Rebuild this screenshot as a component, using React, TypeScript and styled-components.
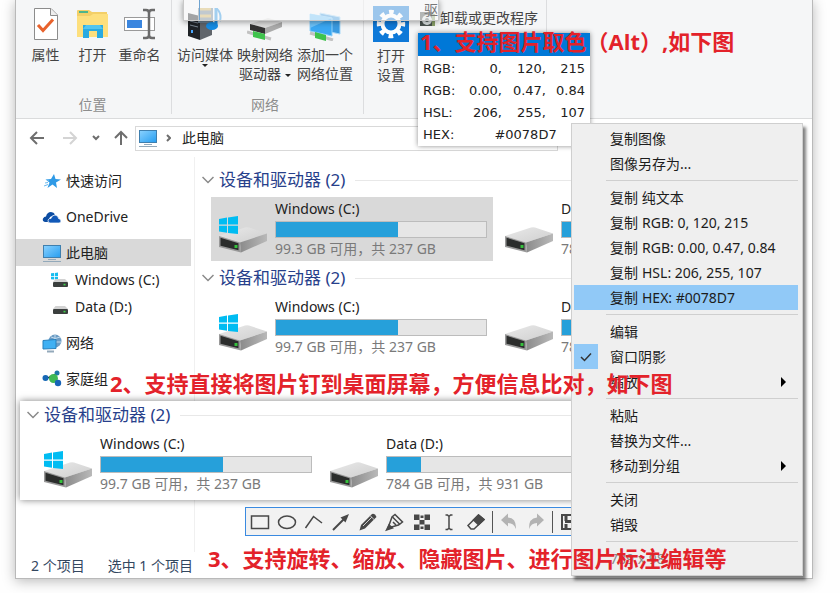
import React from "react";
import styled, { createGlobalStyle, css } from "styled-components";

const uiFont = `"Noto Sans", "Noto Sans CJK SC", sans-serif`;

const GlobalStyle = createGlobalStyle`
  * { box-sizing: border-box; }
  body { margin: 0; background: #fefefe; font-family: ${uiFont}; font-size: 14px; line-height: 18px; color: #222; }
  button, input { font: inherit; color: inherit; }
  button { background: none; border: 0; padding: 0; margin: 0; text-align: left; white-space: nowrap; }
  h2, ul, p { margin: 0; padding: 0; font-weight: 400; }
  svg { display: block; flex: none; }
`;

const Desktop = styled.main`
  position: relative;
  display: flex;
  flex-direction: column;
  min-height: 100vh;
  padding: 0 27px 14px 15px;
  overflow: hidden;
`;

const Window = styled.section`
  flex: 1;
  display: flex;
  flex-direction: column;
  background: #fff;
  border: solid #b9b9b9;
  border-width: 0 1px 1px;
  box-shadow: 0 2px 12px rgba(0, 0, 0, 0.28);
`;

/* Ribbon */

const Ribbon = styled.div`
  display: flex;
  height: 119px;
  background: #f5f6f7;
  border-bottom: 1px solid #dadbdc;
`;

const RibbonGroup = styled.div<{ $pad?: string }>`
  display: flex;
  flex-direction: column;
  justify-content: space-between;
  margin: 0 0 4px;
  padding: ${(p) => p.$pad ?? "8px 8px 0 6px"};
  border-right: 1px solid #dcdddf;
`;

const RibbonItems = styled.div`
  display: flex;
`;

const RibbonButton = styled.button<{ $width: number }>`
  display: flex;
  flex-direction: column;
  align-items: center;
  width: ${(p) => p.$width}px;
  text-align: center;
  color: #444;
  line-height: 19px;
  svg { margin-bottom: 4px; }
`;

const GroupLabel = styled.div`
  text-align: center;
  color: #8d8d8d;
`;

const DownMark = styled.i<{ $inline?: boolean }>`
  display: ${(p) => (p.$inline ? "inline-block" : "block")};
  margin-left: ${(p) => (p.$inline ? 4 : 0)}px;
  vertical-align: middle;
  border: 3px solid transparent;
  border-top-color: #222;
  border-bottom: 0;
`;

const ProgramButton = styled.button`
  display: flex;
  align-items: center;
  gap: 4px;
  height: 24px;
  margin-left: 5px;
  color: #444;
`;

/* Address row */

const AddressRow = styled.nav`
  display: flex;
  align-items: center;
  height: 38px;
  padding-left: 13px;
`;

const NavButton = styled.button<{ $width: number }>`
  width: ${(p) => p.$width}px;
`;

const AddressBox = styled.div`
  display: flex;
  align-items: center;
  flex: 0 1 423px;
  height: 25px;
  padding: 0 2px;
  border: 1px solid #d9d9d9;
  gap: 8px;
  button { margin-left: 3px; }
`;

/* Body */

const Body = styled.div`
  display: flex;
  flex: 1;
`;

const Sidebar = styled.ul`
  flex: none;
  width: 179px;
  padding: 10px 3px 0 0;
  list-style: none;
  border-right: 1px solid #f0f0f0;
`;

const SideLink = styled.button<{ $selected?: boolean; $nested?: boolean; $gap?: boolean }>`
  display: flex;
  align-items: center;
  gap: ${(p) => (p.$nested ? 6 : 4)}px;
  width: 100%;
  height: 27px;
  margin-bottom: ${(p) => (p.$gap ? 9 : 0)}px;
  padding-left: ${(p) => (p.$nested ? 35 : 26)}px;
  background: ${(p) => (p.$selected ? "#d9d9d9" : "transparent")};
`;

const Content = styled.div`
  flex: 1;
  min-width: 0;
  padding: 10px 24px 0 7px;
`;

const GroupBox = styled.section`
  height: 98px;
`;

const GroupTitle = styled.h2`
  display: flex;
  align-items: center;
  gap: 5px;
  height: 26px;
  font-size: 17px;
  line-height: 26px;
  color: #27408b;
  white-space: nowrap;
  &::after {
    content: "";
    flex: 1;
    margin-left: 5px;
    border-top: 1px solid #e8e8e8;
  }
`;

const Tiles = styled.div`
  display: flex;
  gap: 4px;
  margin: 4px 0 0 9px;
`;

const Tile = styled.article<{ $selected?: boolean }>`
  display: flex;
  flex: none;
  gap: 8px;
  width: 282px;
  height: 64px;
  padding: 3px 6px 0 8px;
  background: ${(p) => (p.$selected ? "#d9d9d9" : "transparent")};
  > svg { margin-top: 16px; }
`;

const TileText = styled.div`
  width: 212px;
`;

const Capacity = styled.div`
  height: 17px;
  margin: 3px 0 2px;
  border: 1px solid #bcbcbc;
  background: #e6e6e6;
`;

const Used = styled.div`
  height: 100%;
  background: #26a0da;
`;

const FreeText = styled.p`
  color: #7a7a7a;
  white-space: nowrap;
`;

const StatusBar = styled.footer`
  display: flex;
  gap: 23px;
  height: 26px;
  padding-left: 15px;
  line-height: 27px;
  color: #33475f;
`;

/* Things floating over the window */

const GhostClip = styled.div`
  position: absolute;
  left: 183px;
  top: 0;
  display: flex;
  justify-content: flex-end;
  width: 256px;
  height: 21px;
  background: rgba(250, 250, 250, 0.6);
  border: solid #c8c8c8;
  border-width: 0 1px 1px;
  box-shadow: 0 1px 6px rgba(0, 0, 0, 0.4);
  color: #777;
  line-height: 20px;
  &::before {
    content: "";
    width: 1px;
    margin-right: auto;
    margin-left: 15px;
    background: #6fa3d0;
  }
`;

const Picker = styled.div`
  position: absolute;
  left: 418px;
  top: 33px;
  width: 172px;
  background: #fff;
  box-shadow: 0 0 5px rgba(0, 0, 0, 0.45);
  font-family: "DejaVu Sans", sans-serif;
  font-size: 13px;
`;

const Swatch = styled.div`
  height: 23px;
  background: #0078d7;
`;

const Values = styled.table`
  width: 100%;
  padding: 2px 5px 0;
  border-spacing: 0;
  th, td { height: 22px; padding: 0; text-align: right; line-height: 22px; }
  th { text-align: left; font-weight: 400; }
  td:nth-child(3) { width: 44px; }
  td:nth-child(4) { width: 39px; }
  td[colspan] { text-align: center; padding-left: 4px; }
`;

const Pinned = styled.div`
  position: absolute;
  left: 20px;
  top: 401px;
  width: 640px;
  height: 99px;
  padding: 1px 20px 0 7px;
  background: #fff;
  box-shadow: 0 0 7px rgba(0, 0, 0, 0.5);
  overflow: hidden;
`;

const Toolbar = styled.div`
  position: absolute;
  left: 245px;
  top: 507px;
  display: flex;
  align-items: center;
  width: 420px;
  height: 29px;
  background: #f2f2f2;
  border: 1px solid #3a8ae0;
`;

const ToolButton = styled.button`
  display: flex;
  justify-content: center;
  width: 27px;
`;

const ToolDivider = styled.span`
  width: 1px;
  height: 22px;
  margin: 0 2px 0 3px;
  background: #555;
`;

const Menu = styled.div`
  position: absolute;
  left: 571px;
  top: 123px;
  width: 232px;
  padding: 2px 4px 4px 2px;
  background: #efefef;
  border: 1px solid #cfcfcf;
  box-shadow: 3px 4px 3px rgba(0, 0, 0, 0.5);
`;

const MenuItem = styled.button<{ $active?: boolean; $muted?: boolean }>`
  display: grid;
  grid-template-columns: 24px auto auto 1fr;
  align-items: center;
  width: 100%;
  height: 25px;
  color: ${(p) => (p.$muted ? "#8a8a8a" : "#1c1c1c")};
  ${(p) => p.$active && css`background: #91c9f7;`}
`;

const CheckCell = styled.span<{ $on?: boolean }>`
  display: flex;
  align-items: center;
  justify-content: center;
  height: 25px;
  background: ${(p) => (p.$on ? "#91c9f7" : "transparent")};
`;

const ItemText = styled.span`
  padding-left: 12px;
`;

const ItemValue = styled.span`
  padding-left: 4px;
`;

const SubMark = styled.i`
  justify-self: end;
  margin-right: 12px;
  border: 5px solid transparent;
  border-left-color: #000;
  border-right: 0;
`;

const MenuRule = styled.hr`
  height: 1px;
  margin: 4px 0 4px 32px;
  border: 0;
  background: #cfcfcf;
`;

const Note = styled.p<{ $x: number; $y: number }>`
  position: absolute;
  left: ${(p) => p.$x}px;
  top: ${(p) => p.$y}px;
  font-family: "Open Sans", "Noto Sans CJK SC", sans-serif;
  font-size: 22px;
  line-height: 28px;
  font-weight: 700;
  color: #e3222a;
  white-space: nowrap;
`;

/* Drawings */

const Drive = ({ system }: { system?: boolean }) => (
  <svg width="48" height="37" viewBox="0 0 48 37">
    <defs>
      <linearGradient id="driveTop" x1="0" x2="1" y1="0" y2="1">
        <stop offset="0" stopColor="#e9e9e9" />
        <stop offset="1" stopColor="#cfcfcf" />
      </linearGradient>
      <linearGradient id="driveSide" x1="0" x2="1">
        <stop offset="0" stopColor="#8b8b8b" />
        <stop offset="1" stopColor="#b9b9b9" />
      </linearGradient>
    </defs>
    <path d="M0 20 26 11.5q2-.5 4 0L48 17.5 21 26.5z" fill="url(#driveTop)" />
    <path d="M21 26.5 48 17.5V25L22 36.5z" fill="url(#driveSide)" />
    <path d="M0 20 21 26.5 22 36.5 0 31z" fill="#999" />
    <path d="M1.5 21.7 19.5 27.3V34.2L1.5 29.7z" fill="#2b2d2c" />
    <rect x="15.5" y="29" width="3" height="3" fill="#35c23c" />
    {system && <path d="M0 3 8 1.6V8.6H0zM9 1.4 19 0V8.6H9zM0 9.7H8V16.8L0 15.6zM9 9.7H19V18L9 16.9z" fill="#00bcf2" />}
  </svg>
);

const SmallDrive = ({ system }: { system?: boolean }) => (
  <svg width="18" height="16" viewBox="0 0 18 16">
    {system && <path d="M0 1.2 3 1V4H0zM3.8 1 7 .5V4H3.8zM0 4.8H3V7.5L0 7.2zM3.8 4.8H7V8L3.8 7.6z" fill="#16bdf0" />}
    <path d="M4.5 7H14L17 10H2z" fill="#d2d2d2" />
    <rect x="2" y="10" width="15" height="5" rx="1" fill="#3b3f3e" />
    <rect x="12.5" y="11.8" width="2" height="1.6" fill="#3fd14a" />
  </svg>
);

const Monitor = () => (
  <svg width="20" height="20" viewBox="0 0 20 20">
    <defs>
      <linearGradient id="screen" x1="0" x2="1" y1="0" y2="1">
        <stop offset="0" stopColor="#8bd2ff" />
        <stop offset="1" stopColor="#259df0" />
      </linearGradient>
    </defs>
    <rect x="1.5" y="2.5" width="17" height="12" fill="url(#screen)" stroke="#3f7fae" />
    <path d="M6 16.500H14M1 18.500H19" stroke="#93a9ba" />
  </svg>
);

const PropertiesIcon = () => (
  <svg width="26" height="33" viewBox="0 0 26 33">
    <path d="M1.500 .5H18L24.500 7V31.500H1.500z" fill="#fff" stroke="#8c8c8c" />
    <path d="M17.500 .5V7.500H24.500" fill="#eee" stroke="#8c8c8c" />
    <path d="M5 17 10 22.500 20 11.500" fill="none" stroke="#e8622c" strokeWidth="3" />
  </svg>
);

const FolderIcon = () => (
  <svg width="33" height="33" viewBox="0 0 33 33">
    <path d="M1 3Q1 2 2 2H13L16 4H31V28L1 29z" fill="#f3cf68" />
    <path d="M1 8H14L17 6H32V29H1z" fill="#fddf7d" />
    <rect x="3" y="3" width="9" height="2" fill="#4db58b" />
    <path d="M7 30V17H27V30H21V23H13V30z" fill="#29aae1" />
    <path d="M7 21 10 17H24L27 21z" fill="#52c5f0" />
  </svg>
);

const RenameIcon = () => (
  <svg width="33" height="33" viewBox="0 0 33 33" fill="none">
    <rect x="1.500" y="9.500" width="30" height="13" fill="#fff" stroke="#9a9a9a" />
    <rect x="4" y="12" width="15" height="8" fill="#3a86df" />
    <path d="M20 2H23Q26 2 26 5V27Q26 30 23 30H20M32 2H29Q26 2 26 5M32 30H29Q26 30 26 27" stroke="#6b6b6b" strokeWidth="2.500" />
  </svg>
);

const MediaIcon = () => (
  <svg width="34" height="33" viewBox="0 0 34 33">
    <path d="M0 5 12 8V32L0 28z" fill="#1e2226" />
    <path d="M12 8 24 5V27L12 32z" fill="#60656b" />
    <path d="M2 13 10 15M2 17 10 19" stroke="#7b8793" />
    <rect x="3" y="22" width="2" height="3" fill="#4aa8ff" />
    <rect x="10" y="-2" width="15" height="17" fill="#6b7f8e" />
    <path d="M12 1H23M12 8H23" stroke="#cfae59" strokeWidth="3" />
    <path d="M28 0V18" stroke="#1f8ee0" strokeWidth="3" />
    <path d="M28 0Q34 5 32 13" fill="none" stroke="#1f8ee0" strokeWidth="2" />
    <ellipse cx="24" cy="18" rx="6" ry="4" fill="#168be2" />
  </svg>
);

const MapDriveIcon = () => (
  <svg width="36" height="33" viewBox="0 0 36 33">
    <path d="M3 16 21 10 35 14 18 20z" fill="#ddd" />
    <path d="M18 20 35 14V19L18 26z" fill="#aaa" />
    <path d="M3 16 18 20V26L3 22z" fill="#333" />
    <path d="M0 24 24 31" stroke="#c2c2c2" strokeWidth="3" />
    <path d="M6 23 18 26V32L6 29z" fill="#3fc34d" />
  </svg>
);

const NetPlaceIcon = () => (
  <svg width="32" height="33" viewBox="0 0 32 33">
    <path d="M11 5 31 9V26L11 22z" fill="#3b9ae0" stroke="#a8d7f7" />
    <path d="M1 6 23 10V28L1 23z" fill="#3aa7f2" stroke="#8fd0fa" />
    <path d="M1 6 23 10 1 20z" fill="#6ec3fa" />
    <path d="M1 25 24 32" stroke="#c2c2c2" strokeWidth="3" />
    <path d="M6 24 17 27V33L6 30z" fill="#3fc34d" />
  </svg>
);

const SettingsIcon = () => (
  <svg width="36" height="36" viewBox="0 0 36 36">
    <rect width="36" height="36" fill="#0f79d8" />
    <circle cx="18" cy="18" r="8.5" fill="none" stroke="#fff" strokeWidth="4" />
    <circle cx="18" cy="18" r="12" fill="none" stroke="#fff" strokeWidth="4.4" strokeDasharray="4.7 4.725" strokeDashoffset="2.35" />
  </svg>
);

const UninstallIcon = () => (
  <svg width="16" height="18" viewBox="0 0 16 18">
    <rect x="0" y="3" width="13" height="14" fill="#4b5350" />
    <rect x="12" y="5" width="3" height="12" fill="#8ba26a" />
    <circle cx="7" cy="11" r="5" fill="#dfe5e5" />
    <circle cx="7" cy="11" r="2" fill="#55605f" />
  </svg>
);

const Arrow = ({ d, color = "#6e6e6e", w = 16 }: { d: string; color?: string; w?: number }) => (
  <svg width={w} height="16" viewBox={`0 0 ${w} 16`} fill="none" stroke={color} strokeWidth="2">
    <path d={d} />
  </svg>
);

const StarIcon = () => (
  <svg width="20" height="18" viewBox="0 0 20 18">
    <path d="M12 2 13.5 7 19 7.5 14 10.5 15 16 10.5 12.5 5.500 16 7.500 10.500 3.500 7.500 9 7z" fill="#2f9ae6" />
    <path d="M3 11 6 10.500M2 14 6 12.500M5 8 7 8.500" stroke="#69b9ef" />
  </svg>
);

const CloudIcon = () => (
  <svg width="20" height="18" viewBox="0 0 20 18">
    <path d="M3 14Q0 13 1 10.500 2 8.500 4 8.500 5 4 9 4 12 4 13 6.500L8 9 6 14z" fill="#0c4da2" />
    <path d="M8 15Q5.500 14.500 6 12 7 10 9 10.500 10 7 13 7 16.500 7.500 16.500 10.500 19 11 19 13 19 15 17 15z" fill="#1259b8" stroke="#fff" strokeWidth=".7" />
  </svg>
);

const NetworkIcon = () => (
  <svg width="20" height="20" viewBox="0 0 20 20">
    <circle cx="13" cy="8" r="6.500" fill="#6c9cc4" />
    <path d="M9 4Q13 7 18 4M13 2V14M8 9H19" stroke="#c4dcee" fill="none" />
    <path d="M1 7.500 14 6.500V15.500L1 16z" fill="#3fb0f3" stroke="#2780bd" />
    <path d="M5 18.500H12" stroke="#93a9ba" strokeWidth="2" />
  </svg>
);

const HomegroupIcon = () => (
  <svg width="20" height="18" viewBox="0 0 20 18">
    <path d="M4 8 11 9 15 3M11 9 16 13" stroke="#9fc6d8" />
    <circle cx="3.500" cy="8" r="3" fill="#1667b5" />
    <circle cx="15" cy="3" r="2.500" fill="#1c78a6" />
    <circle cx="11.500" cy="8.500" r="4.500" fill="#3fb954" />
    <circle cx="16" cy="13" r="3.200" fill="#1764b8" />
  </svg>
);

const Chevron = () => (
  <svg width="12" height="12" viewBox="0 0 12 12" fill="none" stroke="#8a8a8a" strokeWidth="1.500">
    <path d="M.5 3 6 8.500 11.500 3" />
  </svg>
);

const Glyph = ({ children, w = 20 }: { children: React.ReactNode; w?: number }) => (
  <svg width={w} height="20" viewBox={`0 0 ${w} 20`} fill="none" stroke="#484848" strokeWidth="1.500">
    {children}
  </svg>
);

const tools: { name: string; art: React.ReactNode }[] = [
  { name: "矩形", art: <rect x="1.500" y="4" width="17" height="12.500" /> },
  { name: "椭圆", art: <ellipse cx="10" cy="10.200" rx="8.500" ry="6.200" /> },
  { name: "折线", art: <path d="M1.500 16 9.500 4.500 18 11" /> },
  { name: "箭头", art: <><path d="M2 18 14 6" strokeWidth="2" /><path d="M18 2 9.500 5.500 14.500 10.500z" fill="#484848" stroke="none" /></> },
  { name: "铅笔", art: <><path d="M1.500 18.500 3 13 14 2Q17 1 18.500 5L7 16.500z" fill="#484848" stroke="none" /><path d="M5 14 14 5M12 3.500 16.500 8" stroke="#d0d0d0" strokeWidth="1" /></> },
  { name: "记号笔", art: <><path d="M3 16 7 5 10 2.500 17.500 10 13.500 13z" /><path d="M7.500 5 15 12.500M8 10 11 13" /><path d="M1.500 18 4 13 7.500 16z" fill="#484848" /></> },
  { name: "马赛克", art: <path d="M2 2.500H7.500V8H2zM12.500 2.500H18V8H12.500zM7.500 8H12.500V12.500H7.500zM2 12.500H7.500V18H2zM12.500 12.500H18V18H12.500zM8.500 3.500H11.500V6H8.500zM8.500 14.500H11.500V17H8.500z" fill="#484848" stroke="none" /> },
  { name: "文字", art: <path d="M6.500 3H8.500L10 4.500 11.500 3H13.500M10 4.500V16M6.500 17.500H8.500L10 16 11.500 17.500H13.500" /> },
  { name: "橡皮擦", art: <><path d="M2 13.500 12.500 3 18 7.500 8 17H5z" /><path d="M7.500 8 12.500 3 18 7.500 12.500 12.800z" fill="#484848" /></> },
];

const undoPath = "M1 8 8 1.500V5.500Q16.500 6 16 17 14 11 8 11V14.500z";

/* Data driven parts */

interface DriveInfo {
  name: string;
  free: string;
  used: number;
  system?: boolean;
}

const dataDrive: DriveInfo = { name: "Data (D:)", free: "784 GB 可用，共 931 GB", used: 16 };

const DriveTile = ({ drive, selected }: { drive: DriveInfo; selected?: boolean }) => (
  <Tile $selected={selected}>
    <Drive system={drive.system} />
    <TileText>
      <p>{drive.name}</p>
      <Capacity role="meter" aria-label={drive.name} aria-valuenow={drive.used}>
        <Used style={{ width: `${drive.used}%` }} />
      </Capacity>
      <FreeText>{drive.free}</FreeText>
    </TileText>
  </Tile>
);

const DriveGroup = ({ free, selected }: { free: string; selected?: boolean }) => (
  <GroupBox>
    <GroupTitle>
      <Chevron />
      设备和驱动器 (2)
    </GroupTitle>
    <Tiles>
      <DriveTile selected={selected} drive={{ name: "Windows (C:)", free: `${free} GB 可用，共 237 GB`, used: 58, system: true }} />
      <DriveTile drive={dataDrive} />
    </Tiles>
  </GroupBox>
);

interface Entry {
  text: string;
  value?: string;
  active?: boolean;
  checked?: boolean;
  sub?: boolean;
  muted?: boolean;
}

const menuSections: Entry[][] = [
  [{ text: "复制图像" }, { text: "图像另存为..." }],
  [
    { text: "复制 纯文本" },
    { text: "复制", value: "RGB: 0, 120, 215" },
    { text: "复制", value: "RGB: 0.00, 0.47, 0.84" },
    { text: "复制", value: "HSL: 206, 255, 107" },
    { text: "复制", value: "HEX: #0078D7", active: true },
  ],
  [{ text: "编辑" }, { text: "窗口阴影", checked: true }, { text: "缩放", sub: true }],
  [{ text: "粘贴" }, { text: "替换为文件..." }, { text: "移动到分组", sub: true }],
  [{ text: "关闭" }, { text: "销毁" }],
  [{ text: "789 x 98", muted: true }],
];

export default function App() {
  return (
    <Desktop>
      <GlobalStyle />
      <Window>
        <Ribbon>
          <RibbonGroup>
            <RibbonItems>
              <RibbonButton $width={47}><PropertiesIcon />属性</RibbonButton>
              <RibbonButton $width={47}><FolderIcon />打开</RibbonButton>
              <RibbonButton $width={47}><RenameIcon />重命名</RibbonButton>
            </RibbonItems>
            <GroupLabel>位置</GroupLabel>
          </RibbonGroup>
          <RibbonGroup $pad="8px 8px 0 3px">
            <RibbonItems>
              <RibbonButton $width={60}><MediaIcon />访问媒体<DownMark /></RibbonButton>
              <RibbonButton $width={60}><MapDriveIcon />映射网络<span>驱动器<DownMark $inline /></span></RibbonButton>
              <RibbonButton $width={60}><NetPlaceIcon />添加一个<span>网络位置</span></RibbonButton>
            </RibbonItems>
            <GroupLabel>网络</GroupLabel>
          </RibbonGroup>
          <RibbonGroup $pad="6px 8px 0 3px">
            <RibbonItems>
              <RibbonButton $width={48}><SettingsIcon />打开<span>设置</span></RibbonButton>
              <ProgramButton><UninstallIcon />卸载或更改程序</ProgramButton>
            </RibbonItems>
          </RibbonGroup>
        </Ribbon>

        <AddressRow aria-label="地址">
          <NavButton $width={33} aria-label="后退"><Arrow d="M15 8H2M8 2 2 8 8 14" /></NavButton>
          <NavButton $width={30} aria-label="前进"><Arrow d="M1 8H14M8 2 14 8 8 14" color="#d4d4d4" /></NavButton>
          <NavButton $width={21} aria-label="最近位置"><Arrow w={8} d="M1 6 4 9 7 6" /></NavButton>
          <NavButton $width={22} aria-label="向上"><Arrow d="M8 15V2M2 8 8 2 14 8" /></NavButton>
          <AddressBox>
            <Monitor />
            <Arrow w={5} d="M1 5 4 8 1 11" />
            <button>此电脑</button>
          </AddressBox>
        </AddressRow>

        <Body>
          <Sidebar>
            <li><SideLink $gap><StarIcon />快速访问</SideLink></li>
            <li><SideLink $gap><CloudIcon />OneDrive</SideLink></li>
            <li><SideLink $selected><Monitor />此电脑</SideLink></li>
            <li><SideLink $nested><SmallDrive system />Windows (C:)</SideLink></li>
            <li><SideLink $nested $gap><SmallDrive />Data (D:)</SideLink></li>
            <li><SideLink $gap><NetworkIcon />网络</SideLink></li>
            <li><SideLink><HomegroupIcon />家庭组</SideLink></li>
          </Sidebar>
          <Content>
            <DriveGroup free="99.3" selected />
            <DriveGroup free="99.7" />
          </Content>
        </Body>

        <StatusBar>
          <span>2 个项目</span>
          <span>选中 1 个项目</span>
        </StatusBar>
      </Window>

      <GhostClip>驱</GhostClip>

      <Pinned>
        <DriveGroup free="99.7" />
      </Pinned>

      <Toolbar role="toolbar" aria-label="标注">
        {tools.map((t) => (
          <ToolButton key={t.name} aria-label={t.name}><Glyph>{t.art}</Glyph></ToolButton>
        ))}
        <ToolDivider />
        <ToolButton aria-label="撤销"><Glyph w={18}><path d={undoPath} fill="#b3b3b3" stroke="none" /></Glyph></ToolButton>
        <ToolButton aria-label="重做"><Glyph w={18}><path d={undoPath} transform="matrix(-1 0 0 1 18 0)" fill="#b3b3b3" stroke="none" /></Glyph></ToolButton>
        <ToolDivider />
        <ToolButton aria-label="保存"><Glyph><path d="M3 3V17H19V3z" strokeWidth="2" /><path d="M6 9.500H17M7 3V9M7 17V12" strokeWidth="3" /></Glyph></ToolButton>
      </Toolbar>

      <Picker>
        <Swatch />
        <Values>
          <tbody>
            <tr><th scope="row">RGB:</th><td>0,</td><td>120,</td><td>215</td></tr>
            <tr><th scope="row">RGB:</th><td>0.00,</td><td>0.47,</td><td>0.84</td></tr>
            <tr><th scope="row">HSL:</th><td>206,</td><td>255,</td><td>107</td></tr>
            <tr><th scope="row">HEX:</th><td colSpan={3}>#0078D7</td></tr>
          </tbody>
        </Values>
      </Picker>

      <Menu role="menu">
        {menuSections.map((section, i) => (
          <React.Fragment key={i}>
            {i > 0 && <MenuRule />}
            {section.map((e) => (
              <MenuItem key={e.text + (e.value ?? "")} role="menuitem" $active={e.active} $muted={e.muted}>
                <CheckCell $on={e.checked}>
                  {e.checked && (
                    <svg width="12" height="10" viewBox="0 0 12 10" fill="none" stroke="#333" strokeWidth="1.500">
                      <path d="M1 5 4.500 8.500 11 1.500" />
                    </svg>
                  )}
                </CheckCell>
                <ItemText>{e.text}</ItemText>
                <ItemValue>{e.value}</ItemValue>
                {e.sub && <SubMark />}
              </MenuItem>
            ))}
          </React.Fragment>
        ))}
      </Menu>

      <Note $x={420} $y={27}>1、支持图片取色（Alt）,如下图</Note>
      <Note $x={110} $y={369}>2、支持直接将图片钉到桌面屏幕，方便信息比对，如下图</Note>
      <Note $x={208} $y={544}>3、支持旋转、缩放、隐藏图片、进行图片标注编辑等</Note>
    </Desktop>
  );
}
